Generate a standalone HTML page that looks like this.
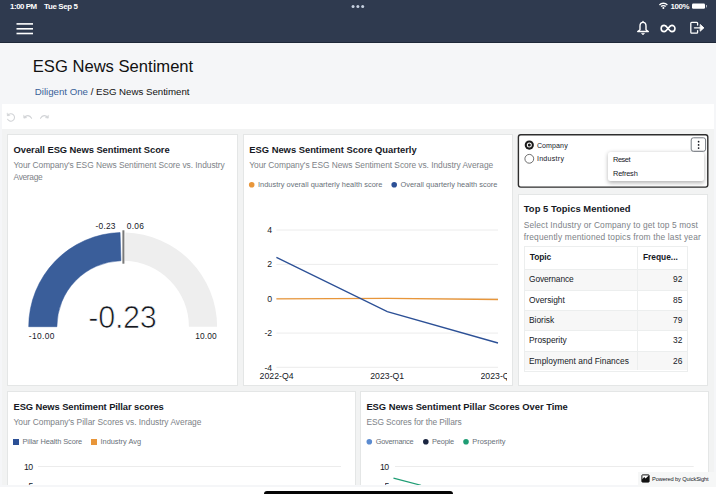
<!DOCTYPE html>
<html><head><meta charset="utf-8">
<style>
*{box-sizing:border-box;margin:0;padding:0}
html,body{width:716px;height:494px;overflow:hidden;background:#f5f6f8;font-family:"Liberation Sans",sans-serif;color:#16191f}
.abs{position:absolute}
#hdr{left:0;top:0;width:716px;height:43px;background:#2f3a4f;border-bottom:1px solid #1f2839}
.st{color:#fff;font-size:7.3px;font-weight:bold;top:2px;line-height:10px;white-space:nowrap}
#title{left:32px;top:57px;font-size:16.6px;line-height:22px;color:#111;white-space:nowrap}
#crumb{left:35px;top:86px;font-size:9.7px;line-height:12px;color:#111;white-space:nowrap}
#crumb a{color:#3a6399;text-decoration:none}
#white{left:2px;top:104px;width:712px;height:25px;background:#fff}
#qs{left:2px;top:129px;width:712px;height:355.500px;background:#f2f3f3;overflow:hidden}
#bot{left:0;top:487px;width:716px;height:7px;background:#fff}
.card{background:#fff;border:1px solid #e4e6e6}
.ct{font-size:10px;font-weight:bold;color:#16191f;line-height:12px;white-space:nowrap;letter-spacing:0.1px}
.cs{font-size:8.5px;color:#7d8287;line-height:12px;letter-spacing:0.1px}
.lg{font-size:7px;color:#687078;line-height:9px;white-space:nowrap}
.ax{font-size:8.5px;color:#16191f;line-height:10px;white-space:nowrap}
.rl{font-size:7.3px;line-height:9px;color:#16191f;white-space:nowrap}
.th{font-size:8.3px;font-weight:bold;line-height:10px;color:#16191f;white-space:nowrap}
.td{font-size:8.3px;line-height:10px;color:#16191f;white-space:nowrap}
.td.r{left:640px;width:42.300px;text-align:right}
.t{position:absolute;white-space:nowrap}
</style></head><body>
<div id="hdr" class="abs"></div>



<svg class="abs" style="left:0;top:0" width="716" height="44" viewBox="0 0 716 44">
 <g fill="#fff">
  <rect x="16.5" y="23.1" width="16.5" height="1.6"/><rect x="16.5" y="28" width="16.5" height="1.6"/><rect x="16.5" y="32.7" width="16.5" height="1.6"/>
  <circle cx="353.050" cy="6.400" r="1.500" fill="#c6d0e0"/><circle cx="357.900" cy="6.400" r="1.500" fill="#c6d0e0"/><circle cx="362.700" cy="6.400" r="1.500" fill="#c6d0e0"/>
  <rect x="692" y="3.6" width="13" height="5.2" rx="1.2"/><rect x="706" y="5" width="1" height="2.4" opacity=".6"/>
 </g>
 <g fill="none" stroke="#fff" stroke-linecap="butt">
  <path d="M659.45 5.02A5.4 5.4 0 0 1 667.35 5.02" stroke-width="1.400"/>
  <path d="M661.13 6.59A3.1 3.1 0 0 1 665.67 6.59" stroke-width="1.400"/>
  <circle cx="663.4" cy="8.1" r="1" fill="#fff" stroke="none"/>
 </g>
 <g fill="none" stroke="#fff" stroke-width="1.400" stroke-linejoin="round" stroke-linecap="round">
  <path d="M643 21.400v.8"/>
  <path d="M640 29.800v-3.700c0-2.200 1.200-3.700 3-3.700s3 1.500 3 3.700v3.700l2.300 1.700h-10.600z"/>
  <path d="M641.800 33.700a1.300 1.300 0 0 0 2.400 0z" fill="#fff" stroke-width=".8"/>
  <path d="M668.050 28.500c-1.400-1.900-2.300-3.100-3.800-3.100a3.100 3.100 0 0 0 0 6.200c1.500 0 2.400-1.200 3.800-3.100s2.300-3.100 3.800-3.100a3.100 3.100 0 0 1 0 6.200c-1.500 0-2.400-1.200-3.800-3.100z" stroke-width="1.600"/>
  <path d="M697.600 25v-1.700a.9.900 0 0 0-.9-.9h-5a.9.900 0 0 0-.9.900v9a.9.900 0 0 0 .9.900h5a.9.900 0 0 0 .9-.9v-1.700" stroke-width="1.300"/>
  <path d="M694.500 27.850h8.600" stroke-width="1.400"/>
  <path d="M700.500 24.800l3.300 3.050-3.300 3.050z" fill="#fff" stroke-width="1"/>
 </g>
</svg>



<div id="white" class="abs"></div>
<div id="qs" class="abs"></div>
<div id="bot" class="abs"></div>
<svg class="abs" style="left:0;top:104px" width="60" height="25" viewBox="0 104 60 25" fill="none" stroke="#d2d4d7" stroke-width="1.100" stroke-linecap="round" stroke-linejoin="round">
 <path d="M7.900 115.200A3.700 3.700 0 1 1 7.600 119.300"/><path d="M7.100 113.300l.3 2.600 2.400-.5z" fill="#d2d4d7" stroke-width=".5"/>
 <path d="M24.200 117.500c2.300-2.600 5.400-2.600 7.400.8"/><path d="M23.500 115.600l.4 2.700 2.600-.6z" fill="#d2d4d7" stroke-width=".5"/>
 <path d="M47.900 117.500c-2.300-2.600-5.400-2.600-7.400.8"/><path d="M48.600 115.600l-.4 2.700-2.600-.6z" fill="#d2d4d7" stroke-width=".5"/>
</svg>

<!-- card 1 -->
<div class="abs card" style="left:7px;top:134px;width:231px;height:251.500px"></div>


<svg class="abs" style="left:0;top:200px" width="240" height="150" viewBox="0 200 240 150"><path d="M28.70 326.70A94.2 94.2 0 0 1 120.09 232.54L120.93 260.73A66 66 0 0 0 56.90 326.70Z" fill="#3a5e9a" stroke="#2f5597" stroke-width=".5"/><path d="M125.42 232.53A94.2 94.2 0 0 1 217.10 326.70L188.90 326.70A66 66 0 0 0 124.66 260.72Z" fill="#eeeeee"/><rect x="122.400" y="230.300" width="2" height="33.400" fill="#7a7a7a"/></svg>






<!-- card 2 -->
<div class="abs card" style="left:243px;top:134px;width:269.500px;height:251.500px"></div>




<svg class="abs" style="left:243px;top:175px" width="269" height="210" viewBox="243 175 269 210">
 <circle cx="251.700" cy="184.800" r="2.800" fill="#e8963a"/><circle cx="394.200" cy="184.800" r="2.800" fill="#2c5096"/>
 <g stroke="#ececec" stroke-width="1"><path d="M276.400 230H498M276.400 264.400H498M276.400 298.400H498M276.400 333.100H498M276.400 367.300H498"/></g>
 <path d="M276.400 298.800L387.300 298.300L498 299.500" stroke="#e8963a" stroke-width="1.300" fill="none"/>
 <path d="M276.400 257.300L387.300 311.600L498 343" stroke="#2c5096" stroke-width="1.300" fill="none"/>
</svg>









<!-- card 3 -->
<svg class="abs" style="left:515px;top:132px" width="196" height="58" viewBox="515 132 196 58"><rect x="518.400" y="134.700" width="189.400" height="52.400" rx="2.300" fill="#fff" stroke="#2e2e2e" stroke-width="1.400"/></svg>
<svg class="abs" style="left:520px;top:136px" width="190" height="50" viewBox="520 136 190 50">
 <circle cx="529.300" cy="145.100" r="4.600" fill="#1c1c1c"/><circle cx="529.300" cy="145.100" r="2.500" fill="#fff"/><circle cx="529.300" cy="145.100" r="1.500" fill="#1c1c1c"/>
 <circle cx="529.300" cy="158.800" r="4.400" fill="#fff" stroke="#4a4a4a" stroke-width=".8"/>
 <rect x="691.200" y="137.800" width="14.400" height="13.500" rx="2.200" fill="#fff" stroke="#757b82" stroke-width="1"/>
 <circle cx="698.600" cy="141.700" r=".85" fill="#16191f"/><circle cx="698.600" cy="144.900" r=".85" fill="#16191f"/><circle cx="698.600" cy="148.100" r=".85" fill="#16191f"/>
</svg>


<div class="abs" style="left:607.800px;top:152.300px;width:96.200px;height:28.300px;background:#fff;border-radius:2.500px;box-shadow:0 1.500px 4px rgba(0,0,0,.3)"></div>



<!-- card 4 -->
<div class="abs card" style="left:517.500px;top:193.500px;width:190.500px;height:192px"></div>


<div class="abs" id="tbl" style="left:523.500px;top:245.500px;width:164.500px;height:126px;border:1px solid #eceeee;background:#fff">
 <div class="abs" style="left:0;top:22.800px;width:162.500px;height:1px;background:#eceeee"></div>
 <div class="abs" style="left:0;top:23.800px;width:162.500px;height:19.400px;background:#f7f7f7"></div>
 <div class="abs" style="left:0;top:43.200px;width:162.500px;height:1px;background:#eceeee"></div>
 <div class="abs" style="left:0;top:63.500px;width:162.500px;height:1px;background:#eceeee"></div>
 <div class="abs" style="left:0;top:64.500px;width:162.500px;height:19.400px;background:#f7f7f7"></div>
 <div class="abs" style="left:0;top:83.900px;width:162.500px;height:1px;background:#eceeee"></div>
 <div class="abs" style="left:0;top:104.200px;width:162.500px;height:1px;background:#eceeee"></div>
 <div class="abs" style="left:0;top:105.200px;width:162.500px;height:18.800px;background:#f7f7f7"></div>
 <div class="abs" style="left:112.600px;top:0;width:1px;height:123.500px;background:#eceeee"></div>
</div>








<!-- card 5 -->
<div class="abs card" style="left:7px;top:391px;width:348.500px;height:93.500px;border-bottom:none"></div>


<div class="abs" style="left:13.300px;top:439px;width:5.700px;height:5.700px;background:#2c5096"></div>

<div class="abs" style="left:91.200px;top:439px;width:5.700px;height:5.700px;background:#e8963a"></div>


<div class="abs" style="left:38px;top:466px;width:302.500px;height:1px;background:#ececec"></div>


<!-- card 6 -->
<div class="abs card" style="left:360px;top:391px;width:348.500px;height:93.500px;border-bottom:none"></div>


<svg class="abs" style="left:360px;top:435px" width="348" height="49.5" viewBox="360 435 348 49.5">
 <circle cx="369.300" cy="441.700" r="2.800" fill="#5b8bd0"/><circle cx="425.800" cy="441.700" r="2.800" fill="#1a2540"/><circle cx="466" cy="441.700" r="2.800" fill="#1f9d74"/>
 <path d="M395 466.500H693.700" stroke="#ececec" stroke-width="1"/>
 <path d="M393.500 478.200L421 485.300" stroke="#1f9d74" stroke-width="1.200"/>
</svg>






<!-- badge -->
<div class="abs" style="left:638px;top:471.500px;width:78px;height:15.500px;background:#f6f7f7"></div>
<svg class="abs" style="left:641.400px;top:473.700px" width="9" height="9" viewBox="0 0 9 9"><rect x=".9" y=".9" width="7.200" height="7.200" rx=".6" fill="#fff" stroke="#111" stroke-width="1"/><path d="M.9 8.100V5.400L3.300 3.100l1.200 1.300L8.100 1.200V8.100z" fill="#111"/></svg>


<div class="abs" style="left:263.500px;top:490.800px;width:189px;height:6px;border-radius:3px;background:#050505"></div>
<div class="t" id="t0" style="top:2.00px;font-size:7.9px;line-height:9px;color:#fff;font-weight:bold;letter-spacing:-0.438px;left:10.00px;">1:00 PM</div>
<div class="t" id="t1" style="top:2.00px;font-size:7.9px;line-height:9px;color:#fff;font-weight:bold;letter-spacing:-0.336px;left:44.00px;">Tue Sep 5</div>
<div class="t" id="t2" style="top:2.00px;font-size:7.9px;line-height:9px;color:#fff;font-weight:bold;letter-spacing:-0.329px;left:670.40px;">100%</div>
<div class="t" id="t3" style="top:57.00px;font-size:16.6px;line-height:19px;color:#111;letter-spacing:-0.004px;left:32.80px;">ESG News Sentiment</div>
<div class="t" id="t4" style="top:86.00px;font-size:9.7px;line-height:11px;color:#3a6399;letter-spacing:-0.012px;left:34.80px;">Diligent One</div>
<div class="t" id="t5" style="top:86.00px;font-size:9.7px;line-height:11px;color:#111;letter-spacing:-0.012px;left:90.65px;">/ ESG News Sentiment</div>
<div class="t" id="t6" style="top:144.00px;font-size:9.4px;line-height:11px;color:#16191f;font-weight:bold;letter-spacing:-0.057px;left:13.50px;">Overall ESG News Sentiment Score</div>
<div class="t" id="t7" style="top:160.00px;font-size:8.4px;line-height:10px;color:#7d8287;letter-spacing:-0.044px;left:13.50px;">Your Company's ESG News Sentiment Score vs. Industry</div>
<div class="t" id="t8" style="top:172.00px;font-size:8.4px;line-height:10px;color:#7d8287;letter-spacing:-0.308px;left:13.50px;">Average</div>
<div class="t" id="t9" style="top:221.00px;font-size:8.4px;line-height:10px;color:#16191f;letter-spacing:0.227px;left:95.50px;">-0.23</div>
<div class="t" id="t10" style="top:221.00px;font-size:8.4px;line-height:10px;color:#16191f;letter-spacing:0.229px;left:126.80px;">0.06</div>
<div class="t" id="t11" style="top:331.00px;font-size:8.4px;line-height:10px;color:#16191f;letter-spacing:0.370px;left:28.80px;">-10.00</div>
<div class="t" id="t12" style="top:331.00px;font-size:8.4px;line-height:10px;color:#16191f;letter-spacing:0.133px;left:195.20px;">10.00</div>
<div class="t" id="t13" style="top:300.00px;font-size:30.6px;line-height:34px;color:#16191f;letter-spacing:-0.309px;left:88.30px;-webkit-text-stroke:0.7px #fff;">-0.23</div>
<div class="t" id="t14" style="top:144.00px;font-size:9.4px;line-height:11px;color:#16191f;font-weight:bold;letter-spacing:-0.012px;left:249.30px;">ESG News Sentiment Score Quarterly</div>
<div class="t" id="t15" style="top:160.00px;font-size:8.4px;line-height:10px;color:#7d8287;letter-spacing:-0.043px;left:249.30px;">Your Company's ESG News Sentiment Score vs. Industry Average</div>
<div class="t" id="t16" style="top:180.00px;font-size:7.4px;line-height:9px;color:#687078;letter-spacing:0.030px;left:258.00px;">Industry overall quarterly health score</div>
<div class="t" id="t17" style="top:180.00px;font-size:7.4px;line-height:9px;color:#687078;letter-spacing:0.012px;left:400.50px;">Overall quarterly health score</div>
<div class="t" id="t18" style="top:225.00px;font-size:8.7px;line-height:10px;color:#16191f;right:443.80px;">4</div>
<div class="t" id="t19" style="top:259.00px;font-size:8.7px;line-height:10px;color:#16191f;right:443.80px;">2</div>
<div class="t" id="t20" style="top:294.00px;font-size:8.7px;line-height:10px;color:#16191f;right:443.80px;">0</div>
<div class="t" id="t21" style="top:328.00px;font-size:8.7px;line-height:10px;color:#16191f;right:443.80px;">-2</div>
<div class="t" id="t22" style="top:363.00px;font-size:8.7px;line-height:10px;color:#16191f;right:443.80px;">-4</div>
<div class="t" id="t23" style="top:371.00px;font-size:8.7px;line-height:10px;color:#16191f;letter-spacing:0.031px;left:259.60px;">2022-Q4</div>
<div class="t" id="t24" style="top:371.00px;font-size:8.7px;line-height:10px;color:#16191f;letter-spacing:0.031px;left:370.20px;">2023-Q1</div>
<div class="t" id="t25" style="top:371.00px;font-size:8.7px;line-height:10px;color:#16191f;letter-spacing:0.031px;left:480.50px;width:26px;overflow:hidden;">2023-Q2</div>
<div class="t" id="t26" style="top:142.00px;font-size:7.1px;line-height:8px;color:#16191f;letter-spacing:0.071px;left:536.90px;">Company</div>
<div class="t" id="t27" style="top:155.00px;font-size:7.1px;line-height:8px;color:#16191f;letter-spacing:0.267px;left:536.90px;">Industry</div>
<div class="t" id="t28" style="top:155.00px;font-size:7.4px;line-height:9px;color:#16191f;letter-spacing:-0.453px;left:613.00px;">Reset</div>
<div class="t" id="t29" style="top:169.00px;font-size:7.4px;line-height:9px;color:#16191f;letter-spacing:-0.190px;left:613.00px;">Refresh</div>
<div class="t" id="t30" style="top:203.00px;font-size:9.4px;line-height:11px;color:#16191f;font-weight:bold;letter-spacing:0.038px;left:523.80px;">Top 5 Topics Mentioned</div>
<div class="t" id="t31" style="top:220.00px;font-size:8.4px;line-height:10px;color:#7d8287;letter-spacing:0.138px;left:523.80px;">Select Industry or Company to get top 5 most</div>
<div class="t" id="t32" style="top:232.00px;font-size:8.4px;line-height:10px;color:#7d8287;letter-spacing:0.168px;left:523.80px;">frequently mentioned topics from the last year</div>
<div class="t" id="t33" style="top:252.00px;font-size:8.4px;line-height:10px;color:#16191f;font-weight:bold;letter-spacing:-0.105px;left:529.80px;">Topic</div>
<div class="t" id="t34" style="top:252.00px;font-size:8.4px;line-height:10px;color:#16191f;font-weight:bold;letter-spacing:-0.001px;left:642.90px;">Freque...</div>
<div class="t" id="t35" style="top:274.00px;font-size:8.4px;line-height:10px;color:#16191f;letter-spacing:-0.103px;left:529.00px;">Governance</div>
<div class="t" id="t36" style="top:274.00px;font-size:8.4px;line-height:10px;color:#16191f;right:33.70px;">92</div>
<div class="t" id="t37" style="top:295.00px;font-size:8.4px;line-height:10px;color:#16191f;left:529.00px;">Oversight</div>
<div class="t" id="t38" style="top:295.00px;font-size:8.4px;line-height:10px;color:#16191f;right:33.70px;">85</div>
<div class="t" id="t39" style="top:315.00px;font-size:8.4px;line-height:10px;color:#16191f;left:529.00px;">Biorisk</div>
<div class="t" id="t40" style="top:315.00px;font-size:8.4px;line-height:10px;color:#16191f;right:33.70px;">79</div>
<div class="t" id="t41" style="top:335.00px;font-size:8.4px;line-height:10px;color:#16191f;left:529.00px;">Prosperity</div>
<div class="t" id="t42" style="top:335.00px;font-size:8.4px;line-height:10px;color:#16191f;right:33.70px;">32</div>
<div class="t" id="t43" style="top:356.00px;font-size:8.4px;line-height:10px;color:#16191f;letter-spacing:0.034px;left:529.00px;">Employment and Finances</div>
<div class="t" id="t44" style="top:356.00px;font-size:8.4px;line-height:10px;color:#16191f;right:33.70px;">26</div>
<div class="t" id="t45" style="top:401.00px;font-size:9.4px;line-height:11px;color:#16191f;font-weight:bold;letter-spacing:-0.093px;left:13.50px;">ESG News Sentiment Pillar scores</div>
<div class="t" id="t46" style="top:417.00px;font-size:8.4px;line-height:10px;color:#7d8287;letter-spacing:-0.008px;left:13.50px;">Your Company's Pillar Scores vs. Industry Average</div>
<div class="t" id="t47" style="top:437.00px;font-size:7.4px;line-height:9px;color:#687078;letter-spacing:-0.084px;left:22.50px;">Pillar Health Score</div>
<div class="t" id="t48" style="top:437.00px;font-size:7.4px;line-height:9px;color:#687078;letter-spacing:-0.004px;left:100.50px;">Industry Avg</div>
<div class="t" id="t49" style="top:462.00px;font-size:8.7px;line-height:10px;color:#16191f;letter-spacing:-0.472px;left:23.90px;">10</div>
<div class="t" id="t50" style="top:481.00px;font-size:8.7px;line-height:10px;color:#16191f;left:28.40px;height:3.50px;overflow:hidden;">5</div>
<div class="t" id="t51" style="top:401.00px;font-size:9.4px;line-height:11px;color:#16191f;font-weight:bold;letter-spacing:-0.027px;left:366.40px;">ESG News Sentiment Pillar Scores Over Time</div>
<div class="t" id="t52" style="top:417.00px;font-size:8.4px;line-height:10px;color:#7d8287;letter-spacing:-0.083px;left:366.40px;">ESG Scores for the Pillars</div>
<div class="t" id="t53" style="top:437.00px;font-size:7.4px;line-height:9px;color:#687078;letter-spacing:-0.274px;left:375.80px;">Governance</div>
<div class="t" id="t54" style="top:437.00px;font-size:7.4px;line-height:9px;color:#687078;letter-spacing:-0.183px;left:432.10px;">People</div>
<div class="t" id="t55" style="top:437.00px;font-size:7.4px;line-height:9px;color:#687078;letter-spacing:-0.009px;left:472.30px;">Prosperity</div>
<div class="t" id="t56" style="top:462.00px;font-size:8.7px;line-height:10px;color:#16191f;letter-spacing:-0.472px;left:380.00px;">10</div>
<div class="t" id="t57" style="top:481.00px;font-size:8.7px;line-height:10px;color:#16191f;left:384.50px;height:3.50px;overflow:hidden;">5</div>
<div class="t" id="t58" style="top:476.00px;font-size:5.7px;line-height:6px;color:#16191f;letter-spacing:-0.131px;left:652.10px;">Powered by QuickSight</div>
</body></html>
